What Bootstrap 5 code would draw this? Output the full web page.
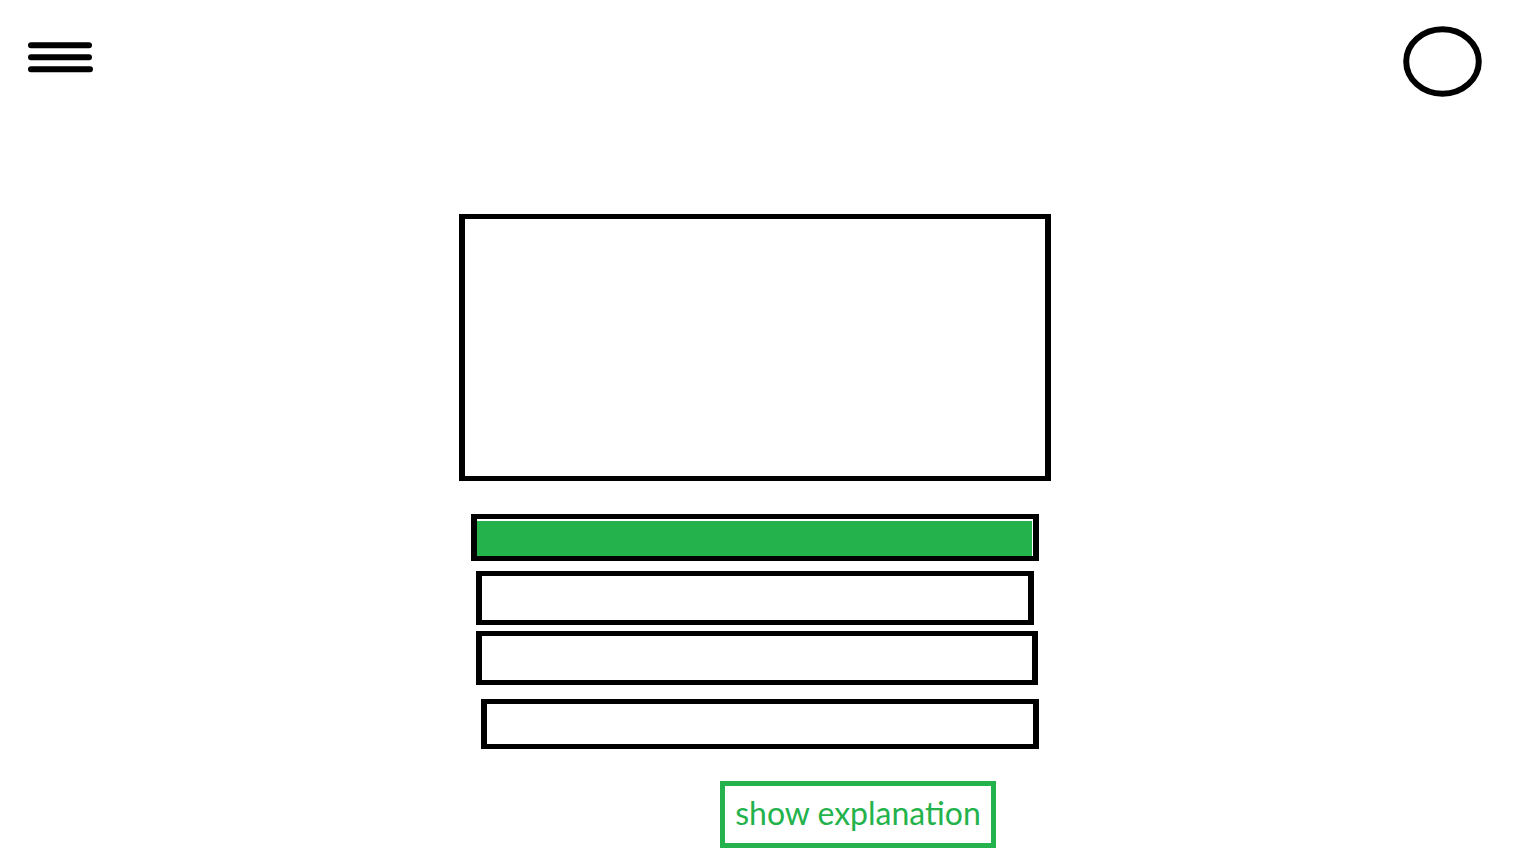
<!DOCTYPE html>
<html lang="en">
<head>
<meta charset="utf-8">
<meta name="viewport" content="width=device-width, initial-scale=1">
<title>Quiz</title>
<link href="https://cdn.jsdelivr.net/npm/bootstrap@5.3.0/dist/css/bootstrap.min.css" rel="stylesheet">
<style>
  :root { --quiz-green: #24b24d; }
  body { background: #fff; font-family: Lato, "Open Sans", sans-serif; }
  .top-bar { padding: 26px 54px 0 28px; }
  .icon-btn { background: none; border: 0; padding: 0; line-height: 0; }
  .menu-btn { margin-top: 15px; }
  .quiz { padding: 117px 26px 16px 0; }
  .question-box { width: 592px; max-width: 100%; height: 267px; border: solid #000; border-width: 5px 6px; }
  .options { width: 568px; max-width: 100%; margin-top: 33px; }
  .option { display: block; background: #fff; border: solid #000; border-width: 5px 6px; border-radius: 0; padding: 0; }
  .option-answer { height: 47px; padding: 2px 1px 0 0; background: var(--quiz-green) content-box; }
  .option-tall { height: 54px; margin: 10px 5px 0 5px; }
  .option-wide { margin: 6px 1px 0 5px; }
  .option-last { height: 50px; margin: 14px 0 0 10px; }
  .explain-btn { width: 276px; height: 67px; margin: 32px 43px 0 0; padding: 0 0 4px; background: #fff; border: 5px solid var(--quiz-green); color: var(--quiz-green); font-size: 32px; line-height: 40px; white-space: nowrap; }
</style>
</head>
<body>
<header class="top-bar d-flex justify-content-between align-items-start">
  <button type="button" class="icon-btn menu-btn" aria-label="Menu">
    <svg width="66" height="33" viewBox="0 0 66 33" fill="none" stroke="#000" stroke-width="6" stroke-linecap="round">
      <path d="M3 4.3H61M3 16.3H61M3 28.3H62"/>
    </svg>
  </button>
  <button type="button" class="icon-btn" aria-label="Profile">
    <svg width="79" height="71" viewBox="0 0 79 71" fill="none" stroke="#000" stroke-width="6">
      <ellipse cx="39.5" cy="35.5" rx="36.3" ry="32.2"/>
    </svg>
  </button>
</header>
<main class="quiz d-flex flex-column align-items-center">
  <section class="question-box" aria-label="Question"></section>
  <div class="options d-flex flex-column">
    <button type="button" class="option option-answer" aria-label="Answer 1, correct"></button>
    <button type="button" class="option option-tall" aria-label="Answer 2"></button>
    <button type="button" class="option option-tall option-wide" aria-label="Answer 3"></button>
    <button type="button" class="option option-last" aria-label="Answer 4"></button>
    <button type="button" class="explain-btn align-self-end">show explanation</button>
  </div>
</main>
<script src="https://cdn.jsdelivr.net/npm/bootstrap@5.3.0/dist/js/bootstrap.bundle.min.js"></script>
</body>
</html>
